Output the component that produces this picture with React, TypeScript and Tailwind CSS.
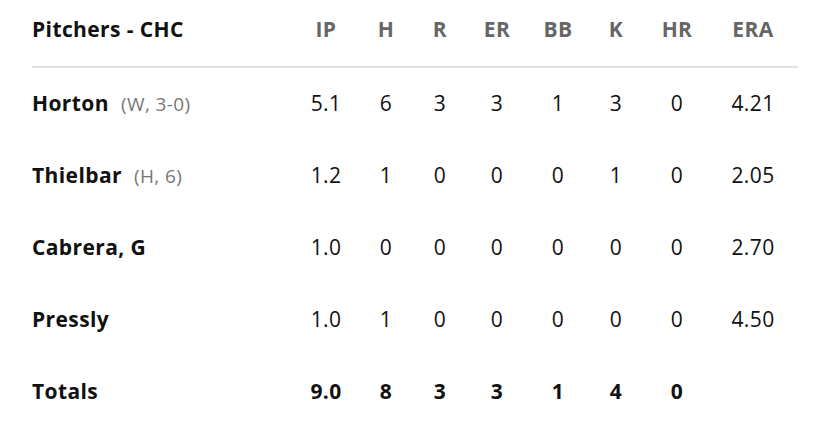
const columns = ['IP', 'H', 'R', 'ER', 'BB', 'K', 'HR', 'ERA']

interface Pitcher {
  name: string
  note?: string
  stats: string[]
}

const pitchers: Pitcher[] = [
  { name: 'Horton', note: '(W, 3-0)', stats: ['5.1', '6', '3', '3', '1', '3', '0', '4.21'] },
  { name: 'Thielbar', note: '(H, 6)', stats: ['1.2', '1', '0', '0', '0', '1', '0', '2.05'] },
  { name: 'Cabrera, G', stats: ['1.0', '0', '0', '0', '0', '0', '0', '2.70'] },
  { name: 'Pressly', stats: ['1.0', '1', '0', '0', '0', '0', '0', '4.50'] },
]

const totals = ['9.0', '8', '3', '3', '1', '4', '0', '']

const grid =
  'grid grid-cols-[264px_60px_60px_48px_66px_56px_60px_62px_90px] items-center'

export default function App() {
  return (
    <div className="w-[828px] h-[429px] bg-white pl-8 pr-[30px] font-['Open_Sans',sans-serif] text-[21px] tracking-[0.4px] text-[#111]">
      {/* header */}
      <div className={`${grid} h-[68px] pb-[6px] border-b-2 border-[#e2e2e2]`}>
        <div className="font-bold">Pitchers - CHC</div>
        {columns.map((c) => (
          <div key={c} className="text-center font-bold text-[#666]">
            {c}
          </div>
        ))}
      </div>

      {pitchers.map((p) => (
        <div key={p.name} className={`${grid} h-[72px]`}>
          <div className="flex items-baseline gap-3">
            <span className="font-bold">{p.name}</span>
            {p.note && <span className="text-[19px] text-[#777]">{p.note}</span>}
          </div>
          {p.stats.map((s, i) => (
            <div key={i} className="text-center">
              {s}
            </div>
          ))}
        </div>
      ))}

      <div className={`${grid} h-[72px] font-bold`}>
        <div>Totals</div>
        {totals.map((s, i) => (
          <div key={i} className="text-center">
            {s}
          </div>
        ))}
      </div>
    </div>
  )
}
